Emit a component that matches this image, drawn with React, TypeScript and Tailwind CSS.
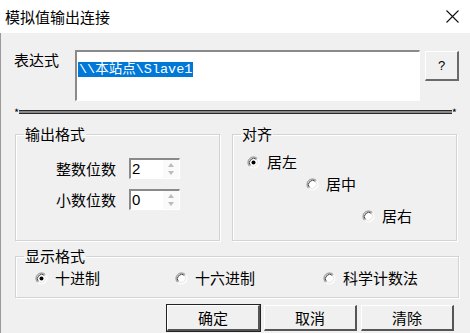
import type { ReactNode } from "react";

const font = { fontFamily: '"Noto Sans CJK SC", "Liberation Sans", sans-serif' };

function Radio({ on }: { on?: boolean }) {
  return (
    <svg width="13" height="13" viewBox="0 0 13 13" className="shrink-0">
      <circle cx="6.5" cy="6.5" r="5.5" fill="#fff" />
      <path d="M2.6 10.4 A5.5 5.5 0 0 1 10.4 2.6" fill="none" stroke="#808080" strokeWidth="1" />
      <path d="M3.4 9.6 A4.4 4.4 0 0 1 9.6 3.4" fill="none" stroke="#404040" strokeWidth="1" />
      <path d="M10.4 2.6 A5.5 5.5 0 0 1 2.6 10.4" fill="none" stroke="#fff" strokeWidth="1" />
      <path d="M9.6 3.4 A4.4 4.4 0 0 1 3.4 9.6" fill="none" stroke="#e3e3e3" strokeWidth="1" />
      {on && <circle cx="6.5" cy="6.5" r="2" fill="#000" />}
    </svg>
  );
}

function Option({ on, label, className }: { on?: boolean; label: string; className?: string }) {
  return (
    <div className={"flex h-[16px] items-center gap-[7px] " + (className ?? "")}>
      <Radio on={on} />
      <span className="leading-[16px]">{label}</span>
    </div>
  );
}

function Group({ title, className, children }: { title: string; className?: string; children: ReactNode }) {
  return (
    <fieldset
      className={
        "border border-[#d3d3d3] shadow-[inset_1px_1px_0_#fff,1px_1px_0_#fff] " + (className ?? "")
      }
    >
      <legend className="ml-[8px] px-[1px] text-[15px] leading-[16px]">{title}</legend>
      {children}
    </fieldset>
  );
}

function Spin({ value }: { value: string }) {
  return (
    <div className="flex h-[21px] w-[51px] border-t-2 border-l-2 border-t-[#8a8a8a] border-l-[#8a8a8a] border-b border-r border-b-white border-r-white bg-white">
      <span className="flex-1 pl-[1px] text-[15px] leading-[18px]" style={{ fontFamily: '"Liberation Sans", sans-serif' }}>
        {value}
      </span>
      <div className="flex w-[16px] flex-col items-center justify-center gap-[4px] bg-[#fafafa]">
        <svg width="6" height="4" viewBox="0 0 6 4">
          <path d="M0 4 L3 0 L6 4 Z" fill="#bcbcbc" />
        </svg>
        <svg width="6" height="4" viewBox="0 0 6 4">
          <path d="M0 0 L3 4 L6 0 Z" fill="#bcbcbc" />
        </svg>
      </div>
    </div>
  );
}

function Btn({ label, main }: { label: string; main?: boolean }) {
  return (
    <button
      className={
        "h-[26px] w-[93px] bg-[#f0f0f0] text-[15px] leading-[20px] border-t border-l border-t-white border-l-white border-b-2 border-r-2 border-b-[#555] border-r-[#555] " +
        (main ? "outline outline-1 outline-[#222]" : "")
      }
    >
      {label}
    </button>
  );
}

export default function App() {
  return (
    <div className="h-[333px] w-[470px] overflow-hidden bg-[#f0f0f0] text-black" style={font}>
      <div className="flex h-[33px] items-center justify-between bg-white pl-[5px] pr-[11px]">
        <span className="text-[15px] leading-[20px]">模拟值输出连接</span>
        <svg width="13" height="13" viewBox="0 0 13 13">
          <path d="M0.5 0.5 L12.5 12.5 M12.5 0.5 L0.5 12.5" stroke="#111" strokeWidth="1.1" />
        </svg>
      </div>

      <div className="h-[300px] border-l border-l-[#9a9a9a]">
        <div className="flex pt-[17px]">
          <span className="ml-[13px] mt-[1px] w-[61px] text-[15px] leading-[18px]">表达式</span>
          <div className="h-[51px] w-[345px] border-t-2 border-l-2 border-t-[#8a8a8a] border-l-[#8a8a8a] border-b border-r border-b-white border-r-white bg-white pl-[1px] pt-[2px]">
            <span className="bg-[#0078d7] px-[1px] text-[13.5px] leading-[14px] text-white" style={{ fontFamily: '"Liberation Mono", "Noto Sans CJK SC", monospace' }}>
              {"\\\\本站点\\Slave1"}
            </span>
          </div>
          <button className="ml-[5px] mt-[1px] h-[30px] w-[34px] border-t border-l border-t-white border-l-white border-b-2 border-r-2 border-b-[#6a6a6a] border-r-[#6a6a6a] bg-[#f0f0f0] text-[13px] leading-[14px]" style={{ fontFamily: '"Liberation Sans", sans-serif' }}>
            ?
          </button>
        </div>

        <div className="mt-[8px] flex items-center px-[13px]">
          <span className="text-[11px] leading-[6px]">*</span>
          <div className="h-[4px] flex-1 border-y border-y-[#2a2a2a] bg-[#8a8a8a]" />
          <span className="text-[11px] leading-[6px]">*</span>
        </div>

        <div className="mt-[11px] flex gap-[12px] pl-[14px]">
          <Group title="输出格式" className="h-[115px] w-[205px]">
            <div className="mt-[16px] flex flex-col gap-[10px] pl-[40px] text-[15px]">
              <div className="flex items-center gap-[13px]">
                <span className="leading-[16px]">整数位数</span>
                <Spin value="2" />
              </div>
              <div className="flex items-center gap-[13px]">
                <span className="leading-[16px]">小数位数</span>
                <Spin value="0" />
              </div>
            </div>
          </Group>
          <Group title="对齐" className="h-[115px] w-[225px]">
            <div className="flex flex-col text-[15px]">
              <Option on label="居左" className="ml-[14px] mt-[12px]" />
              <Option label="居中" className="ml-[73px] mt-[6px]" />
              <Option label="居右" className="ml-[129px] mt-[16px]" />
            </div>
          </Group>
        </div>

        <div className="mt-[7px] pl-[14px]">
          <Group title="显示格式" className="h-[50px] w-[444px]">
            <div className="mt-[6px] flex text-[15px]">
              <Option on label="十进制" className="ml-[19px] w-[140px]" />
              <Option label="十六进制" className="w-[148px]" />
              <Option label="科学计数法" />
            </div>
          </Group>
        </div>

        <div className="mt-[7px] flex gap-[4px] pl-[166px]">
          <Btn label="确定" main />
          <Btn label="取消" />
          <Btn label="清除" />
        </div>
      </div>
    </div>
  );
}
